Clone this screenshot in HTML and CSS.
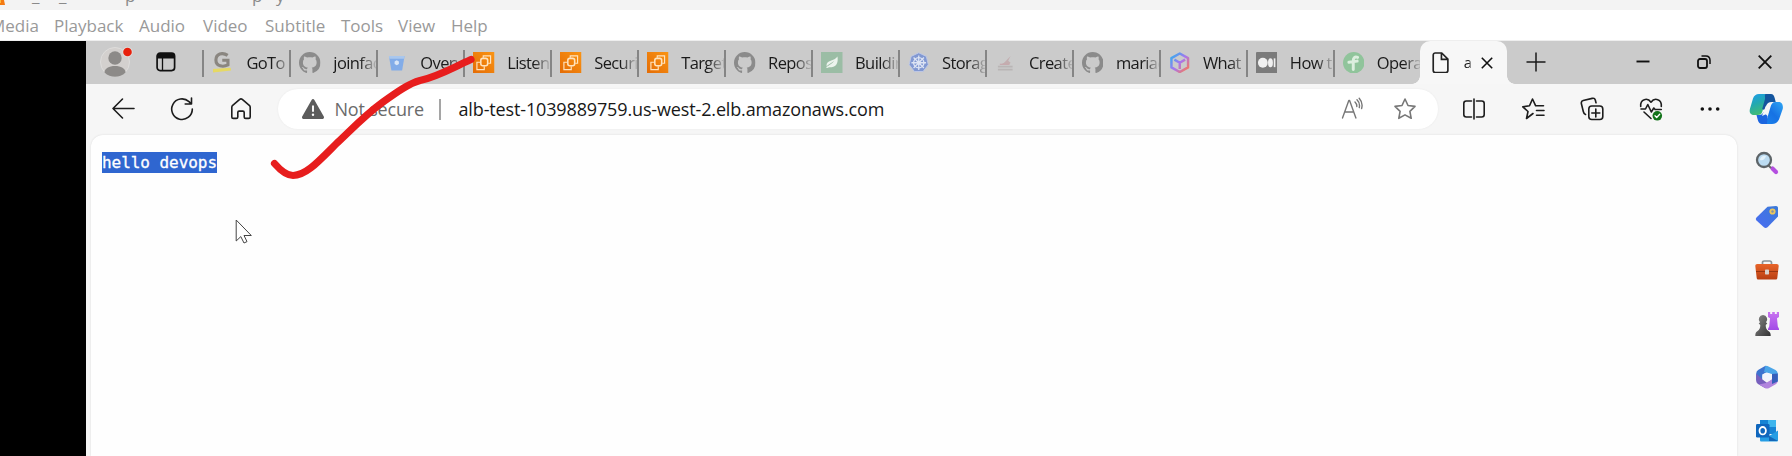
FILE: index.html
```html
<!DOCTYPE html>
<html lang="en">
<head>
<meta charset="utf-8">
<title>Media player</title>
<link rel="stylesheet" href="styles.css">
</head>
<body>
<svg class="defs" aria-hidden="true">
  <defs>
    <linearGradient id="cube" x1="0" y1="0" x2="1" y2="1"><stop offset="0" stop-color="#28b2ee"/><stop offset=".5" stop-color="#a875ee"/><stop offset="1" stop-color="#ff7a4a"/></linearGradient>
    <linearGradient id="orange" x1="0" y1="1" x2="1" y2="0"><stop offset="0" stop-color="#e46c06"/><stop offset="1" stop-color="#fa9413"/></linearGradient>
    <linearGradient id="cop1" x1="0" y1="0" x2=".4" y2="1"><stop offset="0" stop-color="#1c9bee"/><stop offset=".5" stop-color="#23a9b0"/><stop offset="1" stop-color="#43bd72"/></linearGradient>
    <linearGradient id="cop2" x1="1" y1="0" x2="0" y2="1"><stop offset="0" stop-color="#2fa6f4"/><stop offset=".5" stop-color="#1672e4"/><stop offset="1" stop-color="#1c86ee"/></linearGradient>
    <linearGradient id="tagg" x1="0" y1="1" x2="1" y2="0"><stop offset="0" stop-color="#4a6cf2"/><stop offset="1" stop-color="#3a7ad8"/></linearGradient>
    <linearGradient id="pawn" x1="0" y1="0" x2="1" y2="1"><stop offset="0" stop-color="#8a8a8a"/><stop offset="1" stop-color="#333"/></linearGradient>
    <linearGradient id="rook" x1="0" y1="0" x2="0" y2="1"><stop offset="0" stop-color="#c873f0"/><stop offset="1" stop-color="#a24be6"/></linearGradient>
    <linearGradient id="case" x1="0" y1="0" x2="0" y2="1"><stop offset="0" stop-color="#e8652a"/><stop offset="1" stop-color="#b83e12"/></linearGradient>
  </defs>
  <symbol id="github" viewBox="0 0 16 16"><path fill="#8b8b8b" d="M8 0C3.58 0 0 3.58 0 8c0 3.54 2.29 6.53 5.47 7.59.4.07.55-.17.55-.38 0-.19-.01-.82-.01-1.49-2.01.37-2.53-.49-2.69-.94-.09-.23-.48-.94-.82-1.13-.28-.15-.68-.52-.01-.53.63-.01 1.08.58 1.23.82.72 1.21 1.87.87 2.33.66.07-.52.28-.87.51-1.07-1.78-.2-3.64-.89-3.64-3.95 0-.87.31-1.59.82-2.15-.08-.2-.36-1.02.08-2.12 0 0 .67-.21 2.2.82.64-.18 1.32-.27 2-.27s1.36.09 2 .27c1.53-1.04 2.2-.82 2.2-.82.44 1.1.16 1.92.08 2.12.51.56.82 1.27.82 2.15 0 3.07-1.87 3.75-3.65 3.95.29.25.54.73.54 1.48 0 1.07-.01 1.93-.01 2.2 0 .21.15.46.55.38A8.01 8.01 0 0 0 16 8c0-4.42-3.58-8-8-8z"/></symbol>
  <symbol id="ec2" viewBox="0 0 22 22"><path fill="url(#orange)" d="M0 0h22v22H0z"/><g fill="none" stroke="#ffe3bd" stroke-width="1.2"><rect x="8" y="6.500" width="7" height="7.500" rx="2" stroke-width="1.600"/><path d="M10.500 6V4H18v7.500h-2.500M7.500 10.500H4V18h7.500v-3.500"/></g></symbol>
</svg>

<header class="titlebar"><svg class="cone" viewBox="0 0 6 5"><path fill="#f47a12" d="M0 0h4l1 5H0z"/><path fill="#fdbb3c" d="M0 0h1v3H0z"/></svg><span class="t1">_</span><span class="t2">_</span><span class="t3">p</span><span class="t4">p</span><span class="t5">y</span></header>
<nav class="menubar">
  <span class="m m-media">Media</span><span class="m m-playback">Playback</span><span class="m m-audio">Audio</span><span class="m m-video">Video</span><span class="m m-subtitle">Subtitle</span><span class="m m-tools">Tools</span><span class="m m-view">View</span><span class="m m-help">Help</span>
</nav>

<main class="stage">
  <section class="browser">
    <div class="tabstrip">
      <div class="profile">
        <svg width="36" height="36" viewBox="0 0 36 36"><circle cx="17" cy="20" r="14.500" fill="#d3d0ce" stroke="#dedddc"/><circle cx="17" cy="16" r="6.700" fill="#8c8a88"/><path fill="#8c8a88" d="M6.500 30.500c0-4 4.500-6.500 10.500-6.500s10.500 2.500 10.500 6.500c-3 3-6.500 4.200-10.500 4.200s-7.500-1.200-10.500-4.200z"/><circle cx="29.500" cy="10" r="5.200" fill="#dedddc"/><circle cx="29.500" cy="10" r="4.300" fill="#e8200c"/></svg>
      </div>
      <div class="spaces">
        <svg width="20" height="20" viewBox="0 0 20 20"><rect x="1.100" y="1.100" width="17.500" height="17.500" rx="3" fill="none" stroke="#111" stroke-width="1.700"/><path fill="#111" d="M1 6.500V4a3 3 0 0 1 3-3h12a3 3 0 0 1 3 3v2.500z"/><path d="M6.500 6v12.500" stroke="#111" stroke-width="1.300"/></svg>
      </div>
      <div class="tab"><svg viewBox="0 0 22 22"><path fill="#e6d964" d="m1 17.500 18-1.500.5 3L1 21z"/><path fill="none" stroke="#8a8680" stroke-width="3.200" d="M16 3.500C10.500-.2 4 1.800 4 8.200c0 6.600 7.500 7.500 12.300 5V8.500H10.500"/></svg><span>GoTo</span></div>
      <div class="tab"><svg><use href="#github"/></svg><span>joinfac</span></div>
      <div class="tab"><svg viewBox="0 0 22 22"><path fill="#82ace8" d="M3 4h16l-2.500 15h-11z"/><path fill="#a9c7ee" d="M3 4h16l-.4 3H3.400z"/><path fill="#d9e6f7" d="m11 8.500 2.200 1.200v2.600L11 13.500l-2.200-1.200V9.700z"/></svg><span>Overvi</span></div>
      <div class="tab"><svg><use href="#ec2"/></svg><span>Listene</span></div>
      <div class="tab"><svg><use href="#ec2"/></svg><span>Securit</span></div>
      <div class="tab"><svg><use href="#ec2"/></svg><span>Target</span></div>
      <div class="tab"><svg><use href="#github"/></svg><span>Reposi</span></div>
      <div class="tab"><svg viewBox="0 0 22 22"><path fill="#9bbda5" d="M0 0h22v22H0z"/><path fill="#edf4ee" d="M16.800 4.500c1 5-.4 10.500-6 11-1.800.2-3-.2-4.300.9l-1.500-.9c3-1.400 6-3.200 8.700-6.500-3 2-5.500 3.400-8 5.500C5 7.500 14 9.500 16.800 4.500z"/></svg><span>Buildin</span></div>
      <div class="tab"><svg viewBox="0 0 22 22"><path fill="#8198d2" stroke="#bdc8e5" d="m11 .8 7.800 3.700 2 8.500-5.400 7H6.600l-5.400-7 2-8.500z"/><g fill="none" stroke="#dde4f4" stroke-width="1.300"><circle cx="11" cy="11" r="5.300"/><circle cx="11" cy="11" r="1.300"/><path d="M11 3.500v15M3.500 11h15M5.700 5.700l10.600 10.600M16.300 5.700 5.700 16.300"/></g></svg><span>Storag</span></div>
      <div class="tab"><svg viewBox="0 0 22 22"><path fill="#c3aeb0" d="M5 12.500c4 0 6-3.500 11-8.500l-2.500 5 2.500 2-2 2H5z"/><path stroke="#b9b5b5" stroke-width="1.800" d="M3 15h15M3 18h15"/><path stroke="#c8a6ac" d="M5 12.500h10"/></svg><span>Create</span></div>
      <div class="tab"><svg><use href="#github"/></svg><span>mariad</span></div>
      <div class="tab"><svg viewBox="0 0 22 22"><path fill="none" stroke="url(#cube)" stroke-width="2.500" stroke-linejoin="round" d="m11 1.500 8.500 4.700v9.600L11 20.500l-8.500-4.700V6.200zM5.500 7.800 11 11l5.500-3.200M11 11v6.500"/></svg><span>What</span></div>
      <div class="tab"><svg viewBox="0 0 22 22"><rect width="22" height="22" rx="1" fill="#7b7b7b"/><circle cx="7" cy="11" r="5" fill="#f0f0f0"/><ellipse cx="14.800" cy="11" rx="2.500" ry="4.700" fill="#f0f0f0"/><path stroke="#f0f0f0" stroke-width="1.700" d="M19 6.500v9"/></svg><span>How t</span></div>
      <div class="tab"><svg viewBox="0 0 22 22"><circle cx="11" cy="11" r="11" fill="#90c49b"/><path fill="none" stroke="#dceede" stroke-width="3" stroke-linecap="round" d="M10.500 18V9c0-3 1.500-4.500 4.500-3.500M6 10.500l8.500-1.200"/></svg><span>Opera</span></div>
      <div class="tab active"><svg viewBox="0 0 22 22" fill="none" stroke="#222" stroke-width="1.700"><path d="M3.300 3a2 2 0 0 1 2-2h6.700l6.300 6.300V19a2 2 0 0 1-2 2h-11a2 2 0 0 1-2-2zM11.700 1v6.500h6.500"/></svg><span>a</span><svg class="close" viewBox="0 0 12 12"><path d="m.8.8 10.400 10.400M11.200.8.8 11.200" stroke="#111" stroke-width="1.600"/></svg></div>
      <div class="newtab"><svg width="20" height="20" viewBox="0 0 20 20"><path d="M10 .5v19M.5 10h19" stroke="#1b1b1b" stroke-width="1.500"/></svg></div>
      <div class="wincontrols">
        <span><svg width="14" height="14" viewBox="0 0 14 14"><path d="M.5 6.500h13" stroke="#111" stroke-width="1.900"/></svg></span>
        <span><svg width="14" height="14" viewBox="0 0 14 14" fill="none" stroke="#111" stroke-width="1.800"><rect x="1" y="4" width="9" height="9" rx="2"/><path d="M4.500 1H9A4.200 4.200 0 0 1 13 5v4" stroke-width="1.500"/></svg></span>
        <span><svg width="14" height="14" viewBox="0 0 14 14"><path d="m.7.700 12.600 12.600M13.300.700.700 13.300" stroke="#111" stroke-width="1.800"/></svg></span>
      </div>
    </div>

    <div class="toolbar">
      <div class="btn"><svg viewBox="0 0 24 24"><path d="M23 11.500H2M11.500 2 2 11.500l9.500 9.500"/></svg></div>
      <div class="btn"><svg viewBox="0 0 24 24"><path d="M22.300 12A10.300 10.300 0 1 1 19 4.600l2 2M21.500 1v6h-6.300"/></svg></div>
      <div class="btn"><svg viewBox="0 0 24 24"><path d="M2.800 10.300c0-.8.300-1.400.9-1.900l7-6c.8-.7 1.800-.7 2.600 0l7 6c.6.500.9 1.100.9 1.900v9.600c0 .9-.6 1.500-1.500 1.500h-3c-.9 0-1.500-.6-1.500-1.500v-4.500c0-.8-.5-1.300-1.300-1.300h-3.800c-.8 0-1.300.5-1.300 1.300v4.500c0 .9-.6 1.500-1.500 1.500h-3c-.9 0-1.500-.6-1.500-1.500z"/></svg></div>
      <div class="address">
        <svg class="warn" viewBox="0 0 22 20"><path fill="#5c5c5c" d="M9.600.9c.6-1.100 2.200-1.100 2.800 0l9.400 16.700c.6 1.100-.2 2.400-1.400 2.400H1.600C.4 20-.4 18.700.2 17.600z"/><path d="M11 6.500v6.200" stroke="#fff" stroke-width="1.900"/><circle cx="11" cy="15.800" r="1.200" fill="#fff"/></svg>
        <span class="insecure">Not secure</span>
        <i class="divider"></i>
        <span class="url">alb-test-1039889759.us-west-2.elb.amazonaws.com</span>
        <svg class="read" viewBox="0 0 24 24"><path d="m2.500 21 6.300-17.500h.8L15.900 21M5 15h8.500M15 5c1.300 1.300 2 2.700 1.800 4.500M17 2.800c2 2 3 4.500 2.300 7.700M19.200 1.200c2.500 2.800 3.500 6.500 2.400 10.300"/></svg>
        <svg class="fav" viewBox="0 0 24 24"><path d="m12 2 3 6.500 7 .9-5.100 4.900 1.300 7-6.200-3.400-6.200 3.400 1.300-7L2 9.400l7-.9z"/></svg>
      </div>
      <div class="btn"><svg viewBox="0 0 24 24"><path d="M9.500 4H4.300a2.500 2.500 0 0 0-2.500 2.500v11a2.500 2.500 0 0 0 2.500 2.500h5.200M14.500 4h5.200a2.500 2.500 0 0 1 2.500 2.500v11a2.500 2.500 0 0 1-2.500 2.500h-5.200M12 2v20"/></svg></div>
      <div class="btn"><svg viewBox="0 0 24 24"><path d="M12 16.500 5.500 21.500l1.500-7-5.200-4.700 6.700-1L11.500 2l3.200 6.800H22.500M15.500 13.500h7.500M15.500 18.300h7.500"/></svg></div>
      <div class="btn"><svg viewBox="0 0 24 24"><rect x="8.800" y="9" width="14" height="13.500" rx="3"/><path d="M15.800 12v8M11.800 16h8M5.500 17.500C4 17 3.600 16 3.300 14.500L1.400 6.700c-.4-1.700.3-2.700 1.800-3.100l9-2.200c1.600-.4 2.700.2 3.100 1.600l.7 2.800"/></svg></div>
      <div class="btn"><svg viewBox="0 0 24 24"><path d="M1.700 9.500C1 2 8.500.2 12 5.200 15.500.2 23 2 22.300 9.500M2 12h4.500l2.300-4.500 3.500 7.500 2.500-4 1.300 1.500h6.200M5 15l7 6.500"/><circle cx="18.300" cy="18.800" r="4.800" fill="#12731a" stroke="none"/><path d="m16 18.800 1.700 1.700 3-3.200" stroke="#fff" stroke-width="1.300"/></svg></div>
      <div class="btn"><svg viewBox="0 0 24 24"><g fill="#111" stroke="none"><circle cx="4.300" cy="12" r="1.800"/><circle cx="12" cy="12" r="1.800"/><circle cx="19.700" cy="12" r="1.800"/></g></svg></div>
      <div class="copilot"><svg width="34" height="32" viewBox="0 0 34 32"><path fill="url(#cop1)" d="M10 1h11c-2 1-3.300 3-4.200 6l-3.300 11c-.9 3-2 4-5 4H5C1.500 22 .1 19.500.9 16L4 5.500C5 2.500 7 1 10 1z"/><path fill="#14559e" d="M17 1h5c2 0 3 1.500 3.700 4l1 4h-4c-3 0-4.800 1.500-5.500 4l-2 4-2-1L16 6c.5-2-1-5 1-5z"/><path fill="url(#cop2)" d="M23 31H13c3 0 4.500-3 5.300-6L21.500 14c.8-3 2-5 5-5H30c3 0 4.500 3.500 3.700 7L30 26.500C28.500 29.500 26 31 23 31z"/><path fill="#1c65df" d="M18 31h-5c-2 0-3.500-1.500-4.200-4L7.500 22h3c2 0 3.200-1 4-3l4 4z"/><path fill="#f7f7f7" d="m16.800 13 4.200-2-3.500 10-4.500 2z"/></svg></div>
    </div>

    <div class="lower">
      <article class="page"><pre><mark>hello devops</mark></pre></article>
      <aside class="sidebar">
        <svg viewBox="0 0 24 24"><path d="m17.500 17.500 3.500 3.500" stroke="#b44fe0" stroke-width="4.200" stroke-linecap="round"/><path d="m13 14 3 3" stroke="#6a6a6a" stroke-width="2"/><circle cx="9" cy="9" r="7" fill="#bcdcf2" stroke="#5d6468" stroke-width="2.300"/><path fill="#e4f3fc" d="M5 9c0-3 3-5 6-4-1 3-3 5-6 4z"/></svg>
        <svg viewBox="0 0 24 24"><path fill="url(#tagg)" d="M12.500 1.800 21 1c1.200 0 2 .7 2 2v8.500L12.500 22.300c-1.300 1.100-2.500 1-3.600 0L1.500 15.500c-.900-1-.900-2 0-3z"/><circle cx="17.500" cy="6.500" r="3.100" fill="#eac75c"/><circle cx="17.500" cy="6.500" r="1.200" fill="#8490a0"/></svg>
        <svg viewBox="0 0 24 24"><path d="M7.500 7V4.800c0-1.200.6-1.800 1.800-1.800h5.400c1.200 0 1.800.6 1.800 1.800V7" fill="none" stroke="#8a9397" stroke-width="1.700"/><path fill="url(#case)" d="M.3 8c0-1.300.6-2 2-2h19.400c1.400 0 2 .7 2 2L22.300 20c0 .9-.6 1.500-1.500 1.500H3.200c-.9 0-1.500-.6-1.500-1.500z"/><path stroke="#983511" d="M1 13.500h22"/><rect x="10" y="11.500" width="4" height="5" rx=".7" fill="#d8d2cd"/></svg>
        <svg viewBox="0 0 24 24"><path fill="url(#rook)" d="M13 0h2.200v2h2V0h2.600v2h2V0H24v5l-2 1.300.8 8.200 1.200 2.200V18H13v-1.300l1.200-2.200.8-8.200L13 5z"/><path fill="url(#pawn)" d="M8 3a4.300 4.300 0 0 1 3 7.300l1.300 1.300-1.600 1.400c0 2.800.6 4.500 3 6.300 1.500 1 2 2 2 4.700H.3c0-2.700.5-3.700 2-4.700 2.400-1.800 3-3.500 3-6.300l-1.600-1.400L5 10.300A4.300 4.300 0 0 1 8 3z"/></svg>
        <svg viewBox="0 0 24 24"><path fill="#3c73cf" d="M10.500.8 3.500 4.700A4.500 4.500 0 0 0 1.200 8.500v7l6-1.200V9.500L14 6z"/><path fill="#4aa5e8" d="m10.500.8 2 .1 8 4A4.500 4.500 0 0 1 22.800 8.500v8l-5.800-2V9L9 7z"/><path fill="#7860bd" d="M1.200 8.500v7c0 1.600.8 3 2.200 3.800l7 3.900 2.800-4.500-6-4.400z"/><path fill="#b184dd" d="M10.400 23.200c1 .5 2.300.5 3.300 0l7-3.900a4.400 4.400 0 0 0 2-3.300L17 14.200l-6 3.700-7 1.700z"/><path fill="#365fba" d="m17 9 5.800-.5v8L17 19z"/><circle cx="12" cy="12" r="4.300" fill="#f1f4fc"/></svg>
        <svg viewBox="0 0 24 24"><path fill="#1683d4" d="M5 1h16v14H5z"/><path fill="#3eb5ed" d="M13 1h8v7h-8z"/><path fill="#0d4f9a" d="M6 8h8v7H6z"/><path fill="#259de4" d="M5 12.500 14 17l9-5.500V21c0 1-.5 1.500-1.500 1.500h-15C5.500 22.500 5 22 5 21z"/><path fill="#1267b8" d="m14 17 9 5h-9z"/><rect x="1" y="5" width="13.500" height="13.500" rx="1.300" fill="#0f66bd"/><ellipse cx="7.700" cy="11.700" rx="3.200" ry="3.700" fill="none" stroke="#fff" stroke-width="1.800"/></svg>
      </aside>
    </div>
  </section>
</main>

<svg class="overlay" viewBox="0 0 1792 456"><path d="M274.500 163.500C281 171 287 175.500 293 175.500C306 175.500 318 162 337 143C352 129 365 115 383 102C397 92 409 83.500 420 80.500C438 76.500 450 69 471 59.500" fill="none" stroke="#e71d1d" stroke-width="7.200" stroke-linecap="round" stroke-linejoin="round"/><path d="M236.200 220v21l4.600-4.400 3.200 6.400 3-1.400-3-6.100h7.300z" fill="#fff" stroke="#444" stroke-width="1"/></svg>
</body>
</html>
```

FILE: styles.css
```css
* { box-sizing: border-box; }
body { margin: 0; width: 1792px; height: 456px; overflow: hidden; background: #fff; font-family: "Open Sans", "Noto Sans", sans-serif; display: flex; flex-direction: column; }
.defs { position: absolute; width: 0; height: 0; }
svg { display: block; flex: none; }

.titlebar { height: 10px; flex: none; background: #f3f3f3; overflow: hidden; display: flex; font-size: 17px; line-height: 20px; color: #8a8a8a; }
.titlebar span { margin-top: -14px; }
.cone { width: 6px; height: 5px; }
.t1 { width: 27px; margin-left: 26px; }
.t2 { width: 66px; }
.t3 { width: 127px; }
.t4 { width: 24px; }

.menubar { height: 31px; flex: none; display: flex; align-items: center; padding-top: 1px; font-size: 17px; color: #999; white-space: nowrap; border-bottom: 1px solid #eee; }
.m { flex: none; }
.m-media { width: 64px; margin-left: -10px; }
.m-playback { width: 85px; }
.m-audio { width: 64px; }
.m-video { width: 62px; }
.m-subtitle { width: 76px; }
.m-tools { width: 57px; }
.m-view { width: 53px; }

.stage { flex: 1; display: flex; background: #000; padding-left: 86px; min-height: 0; }
.browser { flex: 1; display: flex; flex-direction: column; background: #f6f6f6; min-width: 0; }

.tabstrip { height: 43px; flex: none; display: flex; background: #cbcbcb; font-size: 16.5px; color: #1a1a1a; }
.profile { width: 54px; padding: 1px 0 0 12px; }
.spaces { width: 62.4px; padding: 11px 0 0 16px; }
.tab { width: 86.96px; flex: none; display: flex; align-items: center; position: relative; padding-left: 10px; overflow: hidden; white-space: nowrap; }
.tab::before { content: ""; position: absolute; left: 0; top: 9px; width: 2px; height: 27px; background: #858585; }
.tab svg { width: 21.5px; height: 21.5px; }
.tab span { flex: 1; min-width: 0; overflow: hidden; margin-left: 12.5px; letter-spacing: -.6px; padding-bottom: 1px; -webkit-mask-image: linear-gradient(90deg, #000 62%, transparent 105%); mask-image: linear-gradient(90deg, #000 62%, transparent 105%); }
.tab.active { background: #f7f7f7; border-radius: 10px 10px 0 0; overflow: visible; padding-left: 10px; }
.tab.active::before, .tab.active::after { content: ""; position: absolute; top: auto; bottom: 0; width: 8px; height: 8px; }
.tab.active::before { left: -8px; background: radial-gradient(circle at 0 0, transparent 7.5px, #f7f7f7 8px); }
.tab.active::after { right: -8px; background: radial-gradient(circle at 100% 0, transparent 7.5px, #f7f7f7 8px); }
.tab.active span { flex: none; width: 8px; font-size: 15px; letter-spacing: 0; }
.tab.active .close { width: 12px; height: 12px; margin-left: 9.500px; }
.newtab { width: 58px; padding: 11px 0 0 19px; }
.wincontrols { margin-left: auto; display: flex; }
.wincontrols span { width: 61px; display: flex; align-items: center; justify-content: center; padding-bottom: 1px; }
.wincontrols span:last-child { width: 58px; padding-left: 3px; padding-right: 0; }

.toolbar { height: 50px; flex: none; display: flex; align-items: center; padding-left: 7.5px; background: #f6f6f6; }
.btn { width: 59px; flex: none; display: flex; justify-content: center; }
.btn svg, .read, .fav { width: 24px; height: 24px; fill: none; stroke: #1d1d1d; stroke-width: 1.6; stroke-linecap: round; stroke-linejoin: round; }
.address { flex: 1; height: 40px; margin: 0 7px; background: #fff; border-radius: 20px; display: flex; align-items: center; padding: 0 21px 0 24px; font-size: 18px; box-shadow: 0 0 2px #e7e7e7; white-space: nowrap; }
.warn { width: 22px; height: 20px; }
.insecure { width: 104px; margin-left: 11px; color: #6b6b6b; letter-spacing: -.2px; }
.divider { width: 2px; height: 21px; background: #a5a5a5; margin-right: 18px; }
.url { flex: 1; color: #181818; letter-spacing: -.14px; }
.read { stroke: #777; margin-right: 29px; stroke-width: 1.4; }
.fav { stroke: #777; }
.copilot { width: 52.5px; flex: none; display: flex; justify-content: center; }

.lower { flex: 1; display: flex; min-height: 0; padding-left: 5px; padding-top: 1px; }
.page { flex: 1; background: #fefefe; border-radius: 12px 12px 0 0; box-shadow: 0 0 2px #d8d8d8; }
pre { margin: 17px 0 0 11px; font: 16px/21px "DejaVu Sans Mono", monospace; letter-spacing: -.05px; }
mark { display: inline-block; height: 21px; background: #2f66d0; color: #fff; -webkit-text-stroke: .3px #fff; }
.sidebar { width: 55px; flex: none; display: flex; flex-direction: column; align-items: center; gap: 29.6px; padding: 16px 0 0 4px; overflow: hidden; }
.sidebar svg { width: 24px; height: 24px; }
.overlay { position: absolute; left: 0; top: 0; width: 1792px; height: 456px; pointer-events: none; }
```
